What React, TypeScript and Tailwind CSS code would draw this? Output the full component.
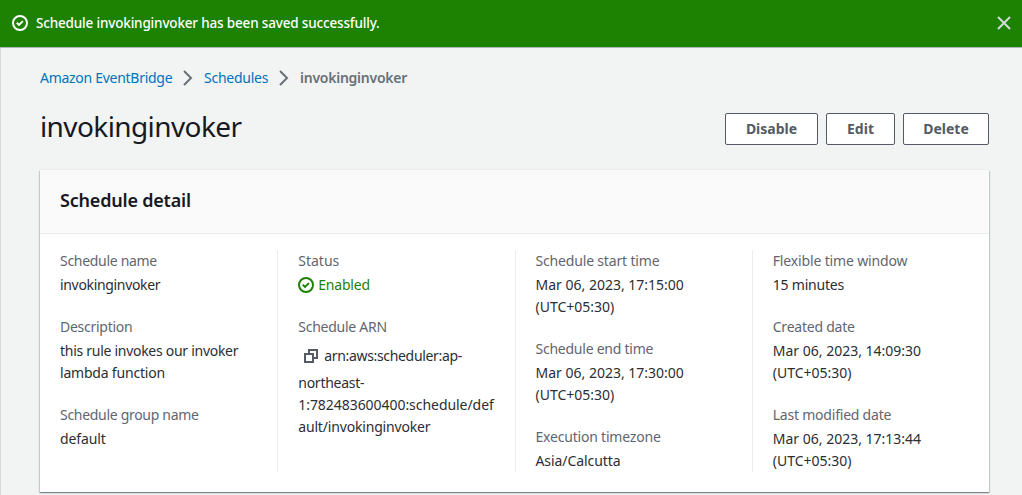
import type { ReactNode } from "react";

function CheckCircle({ className }: { className?: string }) {
  return (
    <svg viewBox="0 0 16 16" className={className} fill="none" stroke="currentColor" strokeWidth="2">
      <circle cx="8" cy="8" r="7" />
      <path d="M4.8 7.8l2.2 2.1 3.9-3.8" />
    </svg>
  );
}

function Chevron() {
  return (
    <svg viewBox="0 0 10 16" className="h-4 w-2.5 shrink-0 text-[#687078]" fill="none" stroke="currentColor" strokeWidth="2">
      <path d="M1 1l7 7-7 7" />
    </svg>
  );
}

function CopyIcon() {
  return (
    <svg viewBox="0 0 14 14" className="size-3.5 shrink-0 text-[#545b64]" fill="none" stroke="currentColor" strokeWidth="2">
      <path d="M1 5h8v8H1zM5 5V1h8v8H9" />
    </svg>
  );
}

function Field({ label, children }: { label: ReactNode; children: ReactNode }) {
  return (
    <div className="flex flex-col gap-0.5">
      <div className="text-[#5f6670]">{label}</div>
      <div>{children}</div>
    </div>
  );
}

function Column({ first, children }: { first?: boolean; children: ReactNode }) {
  return (
    <div className={first ? "flex flex-col gap-5 whitespace-nowrap pl-5" : "flex flex-col gap-5 whitespace-nowrap border-l border-[#eaeded] pl-5"}>
      {children}
    </div>
  );
}

function Button({ className, children }: { className: string; children: ReactNode }) {
  return (
    <button className={`h-8 rounded-xs border border-[#545b64] bg-white text-center font-bold text-[#545b64] ${className}`}>
      {children}
    </button>
  );
}

export default function App() {
  return (
    <div className="flex h-[495px] w-[1022px] flex-col overflow-hidden bg-[#f2f3f3] font-['Noto_Sans','Open_Sans',sans-serif] text-[14px] leading-[22px] text-[#2b2e34]">
      <header className="flex h-12 shrink-0 items-center border-b border-[#aab7b8] bg-[#1d8102] pr-2.5 pb-px pl-3 text-white">
        <CheckCircle className="size-4" />
        <span className="ml-2 text-[13.5px] font-medium tracking-[-0.17px]">Schedule invokinginvoker has been saved successfully.</span>
        <svg viewBox="0 0 16 16" className="ml-auto size-4 text-[#d5dbdb]" fill="none" stroke="currentColor" strokeWidth="2">
          <path d="M2 2l12 12M14 2L2 14" />
        </svg>
      </header>
      <main className="flex grow flex-col border-l border-[#d5dbdb] pl-[39px]">
        <nav className="mt-[19px] flex h-[22px] items-center text-[#0073bb]">
          <span className="w-[143px] tracking-[-0.28px]">Amazon EventBridge</span>
          <Chevron />
          <span className="ml-[11px] w-[75px] tracking-[-0.25px]">Schedules</span>
          <Chevron />
          <span className="ml-[11px] font-semibold tracking-[-0.25px] text-[#687078]">invokinginvoker</span>
        </nav>
        <div className="mt-5 flex h-9 w-[949px] items-center">
          <h1 className="-mt-0.5 text-[28px] leading-9 tracking-[-0.6px] text-[#16191f]">invokinginvoker</h1>
          <div className="mt-1 ml-auto flex gap-2">
            <Button className="w-[93px]">Disable</Button>
            <Button className="w-[69px]">Edit</Button>
            <Button className="w-[86px]">Delete</Button>
          </div>
        </div>
        <section className="mt-[25px] flex h-[322px] w-[949px] shrink-0 flex-col bg-white shadow-[0_1px_1px_0_rgba(0,28,36,0.3),1px_1px_1px_0_rgba(0,28,36,0.15),-1px_1px_1px_0_rgba(0,28,36,0.15),0_-1px_0_0_#eaeded]">
          <div className="flex h-16 shrink-0 items-center border-b border-[#eaeded] bg-[#fafafa] pb-1 pl-5">
            <h2 className="text-[18px] font-semibold tracking-[-0.2px] text-[#16191f]">Schedule detail</h2>
          </div>
          <div className="mt-4 grid h-[222px] grid-cols-4">
            <Column first>
              <Field label={<span className="tracking-[-0.3px]">Schedule name</span>}>
                <span className="tracking-[-0.33px]">invokinginvoker</span>
              </Field>
              <Field label={<span className="tracking-[-0.27px]">Description</span>}>
                <span className="tracking-[-0.28px]">this rule invokes our invoker</span>
                <br />
                <span className="tracking-[-0.2px]">lambda function</span>
              </Field>
              <Field label={<span className="tracking-[-0.3px]">Schedule group name</span>}>
                <span className="tracking-[-0.1px]">default</span>
              </Field>
            </Column>
            <Column>
              <Field label="Status">
                <div className="flex items-center gap-1 tracking-[-0.2px] text-[#1d8102]">
                  <CheckCircle className="size-4" />
                  Enabled
                </div>
              </Field>
              <Field label={<span className="tracking-[-0.25px]">Schedule ARN</span>}>
                <div className="flex h-8 items-center gap-1.5 pl-1.5 tracking-[-0.33px]">
                  <CopyIcon />
                  arn:aws:scheduler:ap-
                </div>
                <span className="tracking-[-0.25px]">northeast-</span>
                <br />
                <span className="tracking-[-0.05px]">1:782483600400:schedule/def</span>
                <br />
                <span className="tracking-[-0.17px]">ault/invokinginvoker</span>
              </Field>
            </Column>
            <Column>
              <Field label={<span className="tracking-[-0.17px]">Schedule start time</span>}>
                Mar 06, 2023, 17:15:00
                <br />
                (UTC+05:30)
              </Field>
              <Field label={<span className="tracking-[-0.24px]">Schedule end time</span>}>
                Mar 06, 2023, 17:30:00
                <br />
                (UTC+05:30)
              </Field>
              <Field label={<span className="tracking-[-0.2px]">Execution timezone</span>}>
                <span className="tracking-[-0.08px]">Asia/Calcutta</span>
              </Field>
            </Column>
            <Column>
              <Field label={<span className="tracking-[-0.15px]">Flexible time window</span>}>
                <span className="tracking-[-0.2px]">15 minutes</span>
              </Field>
              <Field label={<span className="tracking-[-0.23px]">Created date</span>}>
                Mar 06, 2023, 14:09:30
                <br />
                (UTC+05:30)
              </Field>
              <Field label={<span className="tracking-[-0.22px]">Last modified date</span>}>
                Mar 06, 2023, 17:13:44
                <br />
                (UTC+05:30)
              </Field>
            </Column>
          </div>
        </section>
      </main>
    </div>
  );
}
